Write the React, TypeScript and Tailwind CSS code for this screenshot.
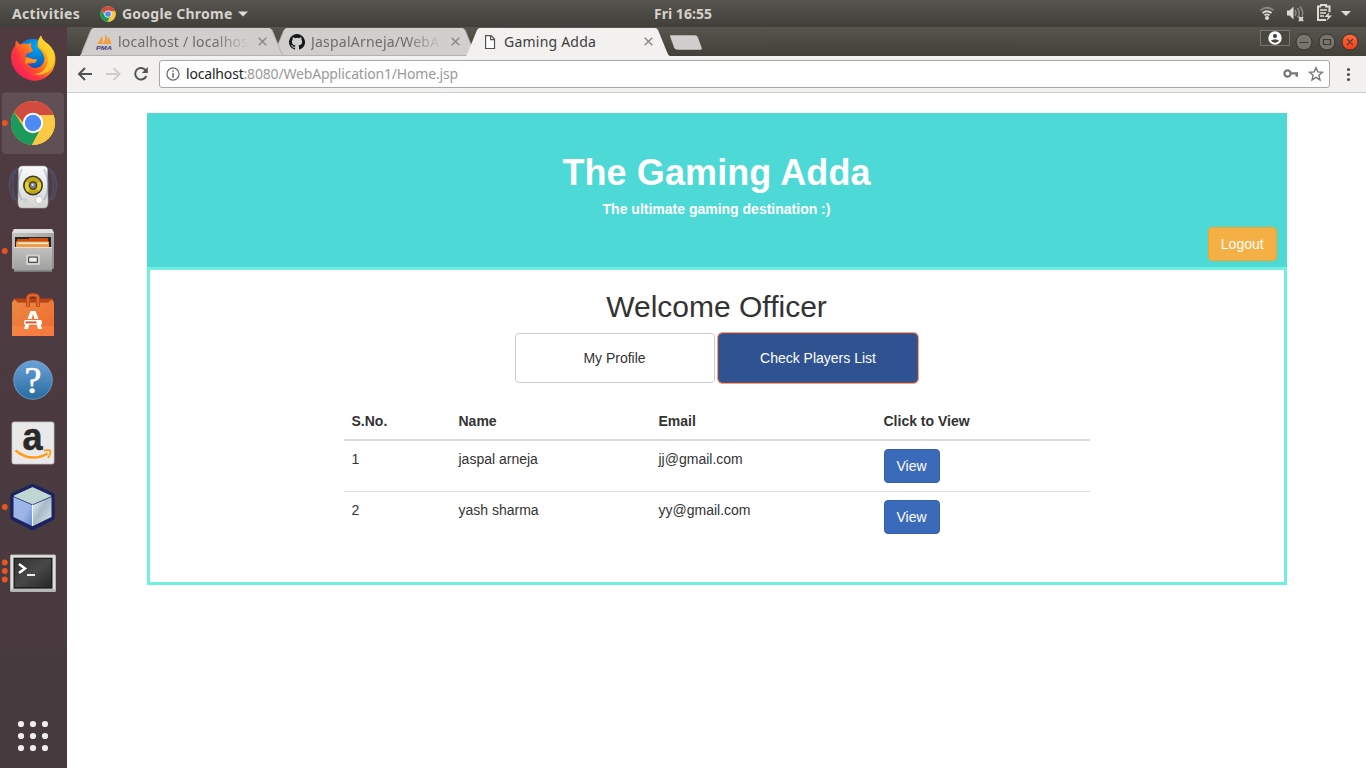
import type { ReactNode } from "react";

function DockItem({ dots = [], active = false, children }: { dots?: number[]; active?: boolean; children: ReactNode }) {
  return (
    <button className="block h-16 w-[67px] shrink-0">
      <svg width="67" height="64" viewBox="0 0 67 64">
        {active && <rect x="2" y="1.5" width="62" height="61.5" rx="4" fill="#fff" fillOpacity=".1" />}
        {dots.map((y) => (
          <circle key={y} cx="4.8" cy={y} r="2.9" fill="#e95420" />
        ))}
        {children}
      </svg>
    </button>
  );
}

function ChromeDisc() {
  return (
    <>
      <circle cx="24" cy="24" r="22" fill="#fbc943" />
      <path d="M4.9 13A22 22 0 0 1 43.1 13L44.500 16H24A9 9 0 0 0 15.500 25Z" fill="#d14b3f" />
      <path d="M4.900 13A22 22 0 0 0 23 46L31.500 30A10 10 0 0 1 15.500 29.500Z" fill="#1b9a5c" />
      <path d="M44.500 16H24L31.500 30 23 46A22 22 0 0 0 44.500 16Z" fill="#fbc943" />
      <circle cx="24" cy="24" r="10.2" fill="#fff" />
      <circle cx="24" cy="24" r="8.2" fill="#4c8bf5" />
    </>
  );
}

function Dock() {
  return (
    <nav className="flex w-[67px] shrink-0 flex-col bg-linear-to-b from-[#503b41] to-[#463a3e]">
      <DockItem>
        <defs>
          <linearGradient id="fox" x1="1" y1="0" x2=".1" y2=".8">
            <stop offset="0" stopColor="#fff04a" />
            <stop offset=".35" stopColor="#ffb018" />
            <stop offset=".65" stopColor="#ff5a28" />
            <stop offset="1" stopColor="#f0185d" />
          </linearGradient>
          <radialGradient id="globe" cx=".6" cy=".2" r=".9">
            <stop offset="0" stopColor="#00a8f5" />
            <stop offset=".6" stopColor="#0861c4" />
            <stop offset="1" stopColor="#37117a" />
          </radialGradient>
        </defs>
        <circle cx="33" cy="30" r="18" fill="url(#globe)" />
        <path d="M16 13.500L20 17.500Q24 16 28 17L31.500 16Q30 19 32 22L33 24Q30 26 27 26.500Q25 29 26 31Q29 29 33 32.500L37 33Q34 37 28 37Q34 44 41 39Q46 34 43.500 28Q41 23 37.500 20Q37 13 41 8.500Q42 13 48 17Q55 23 55.500 31Q56 44 45 51Q34 57 23 50Q12 43 11 31Q11 24 15 19Z" fill="url(#fox)" />
        <path d="M41 8.500Q36 16 40 21Q50 26 47 38Q43 47 34 47Q47 50 53 39Q57 25 48 17Q42 13 41 8.500Z" fill="#ffd52e" opacity=".8" />
        <path d="M15 19Q11 25 11 32Q13 47 26 51.500Q38 57 46 49Q29 52 22 41Q18 34 20 27Z" fill="#ff294d" opacity=".55" />
        <path d="M25 37Q29 34 35 36Q37 34 36.500 32Q30 33 26 30Z" fill="#ff9a22" />
      </DockItem>
      <DockItem active dots={[32]}>
        <g transform="translate(9 8)"><ChromeDisc /></g>
      </DockItem>
      <DockItem>
        <defs>
          <linearGradient id="speaker" x1="0" y1="0" x2="0" y2="1"><stop stopColor="#fafafa" /><stop offset="1" stopColor="#d4d5d1" /></linearGradient>
        </defs>
        <path d="M18.500 11L18 53H48L47.500 11Z" fill="none" />
        <path d="M23 11H43Q47.500 11 47.500 15L48 48Q48 53 44 53H22Q18 53 18 48L18.500 15Q18.500 11 23 11Z" fill="url(#speaker)" stroke="#aaa" strokeWidth=".6" />
        <g fill="none" stroke="#4f76b0" strokeWidth="1.800" opacity=".32">
          <path d="M14 15Q5 31 14 45M17 13Q8 31 17 47M22 14Q14 31 22 45" />
          <path d="M52 15Q61 31 52 45M49 13Q58 31 49 47M44 14Q52 31 44 45" />
        </g>
        <circle cx="33" cy="30.500" r="10" fill="#363731" />
        <circle cx="33" cy="30.500" r="8.400" fill="#c3a717" />
        <path d="M33 30.500L26 26.500A8 8 0 0 0 28 37ZM33 30.500L40 26.500A8 8 0 0 1 39 36Z" fill="#e9cd2e" />
        <circle cx="33" cy="30.500" r="4.300" fill="#403b26" />
        <circle cx="33" cy="30.500" r="3" fill="#72818c" />
        <circle cx="32.600" cy="29.800" r="1.200" fill="#dce3e8" />
        <circle cx="39" cy="45" r="3.600" fill="#fff" stroke="#aaa" strokeWidth=".6" />
        <path d="M24 44h3v3h-3z" fill="none" stroke="#bbb" strokeWidth=".6" />
      </DockItem>
      <DockItem dots={[32]}>
        <defs>
          <linearGradient id="cabinet" x1="0" y1="0" x2="1" y2="1"><stop stopColor="#c8c8c6" /><stop offset="1" stopColor="#8b8b8b" /></linearGradient>
          <linearGradient id="drawer" x1="0" y1="0" x2="0" y2="1"><stop stopColor="#c1c1bf" /><stop offset="1" stopColor="#a0a09e" /></linearGradient>
        </defs>
        <path d="M14 10H52L54 14V49Q54 50 52 50V53H14V50Q12 50 12 49V14Z" fill="url(#cabinet)" />
        <path d="M14 10H52L54 14H12Z" fill="#dededd" />
        <path d="M15 18H51V28H15Z" fill="#292422" />
        <path d="M17 20H29V19H48V27H17Z" fill="#c84e12" />
        <path d="M16 22.500H49V28H16Z" fill="#f49c45" />
        <path d="M18 23.500H48V25H18Z" fill="#fff3db" />
        <path d="M14 28H52V51H14Z" fill="url(#drawer)" />
        <path d="M14 28.500H52" stroke="#dededd" strokeWidth="1" />
        <path d="M14 51.500H52V53H14Z" fill="#777" />
        <rect x="26" y="35.500" width="14" height="10.500" rx="1.500" fill="#d2d2d0" />
        <rect x="28" y="37.500" width="10" height="6.500" rx="1" fill="#4f4f4f" />
        <rect x="29.200" y="38.700" width="7.600" height="4" fill="#eee" />
      </DockItem>
      <DockItem>
        <defs>
          <linearGradient id="bag" x1="0" y1="0" x2="1" y2="1"><stop stopColor="#e98a43" /><stop offset="1" stopColor="#f26930" /></linearGradient>
        </defs>
        <path d="M14 15.500H52L54 19.500H12Z" fill="#bb4413" />
        <path d="M12 19.500L14 16.500 18 19.500 48 19.500 52 16.500 54 19.500V53H12Z" fill="url(#bag)" />
        <path d="M12 43H54V53H12Z" fill="#ff8b4e" opacity=".45" />
        <path d="M28 24V14.500Q28.500 12 33 12Q37.500 12 38 14.500V24" fill="none" stroke="#c34916" strokeWidth="4" />
        <path d="M28 23.500V14.500Q28.500 12 33 12Q37.500 12 38 14.500V23.500" fill="none" stroke="#e96a37" strokeWidth="1.700" />
        <path d="M30.500 28H35.500L38.500 36H34.500L33 31 31.500 36H27.500ZM25.500 41H29.500L28 46H24ZM36.500 41H40.500L42 46H38Z" fill="#fff" />
        <rect x="24" y="37" width="18" height="4.800" rx="1.500" fill="#fff" />
        <rect x="25.500" y="38.400" width="11" height="2" fill="#e3542c" />
      </DockItem>
      <DockItem>
        <defs>
          <linearGradient id="help" x1="0" y1="0" x2="0" y2="1"><stop stopColor="#6aa2d8" /><stop offset="1" stopColor="#286b9e" /></linearGradient>
        </defs>
        <circle cx="33" cy="34" r="19.500" fill="#263e53" opacity=".55" />
        <circle cx="33" cy="33" r="19.300" fill="url(#help)" stroke="#7ca7ce" strokeWidth=".8" />
        <text x="33" y="46" textAnchor="middle" fontFamily="Liberation Serif" fontSize="38" fill="#fff" stroke="#fff" strokeWidth=".7">?</text>
      </DockItem>
      <DockItem>
        <rect x="12" y="11" width="42" height="42" rx="2" fill="#e9e9e9" stroke="#c6c1c2" strokeWidth=".8" />
        <text x="32.500" y="39" textAnchor="middle" fontFamily="Liberation Sans" fontWeight="700" fontSize="39" fill="#292929" stroke="#292929" strokeWidth=".6" textLength="20" lengthAdjust="spacingAndGlyphs">a</text>
        <path d="M15.500 39.500Q31 52 47.500 42.500" fill="none" stroke="#ff9b12" strokeWidth="2.500" />
        <path d="M44 39.500Q50 38.500 50.500 40Q51 42 48 47" fill="none" stroke="#ff9b12" strokeWidth="1.800" />
      </DockItem>
      <DockItem dots={[32]}>
        <defs>
          <linearGradient id="cubeLeft" x1="0" y1="0" x2="1" y2="1"><stop stopColor="#9fbaf0" /><stop offset=".6" stopColor="#9bb4e5" /><stop offset="1" stopColor="#6488ce" /></linearGradient>
          <linearGradient id="cubeRight" x1="0" y1="0" x2="1" y2="1"><stop stopColor="#f2faff" /><stop offset=".45" stopColor="#a8b9c7" /><stop offset="1" stopColor="#dce9ed" /></linearGradient>
        </defs>
        <path d="M32.500 11.500L52 20.500V42.500L32.500 52.500 13 42.500V20.500Z" fill="#1b2360" stroke="#1b2360" strokeWidth="5.500" strokeLinejoin="round" />
        <path d="M32.500 12.500L51 21 32.500 29 14 21Z" fill="#bed7d3" stroke="#dcefed" strokeWidth=".7" />
        <path d="M13.500 22L32 30V51L13.500 42Z" fill="url(#cubeLeft)" />
        <path d="M51.500 22L33 30V51L51.500 42Z" fill="url(#cubeRight)" />
        <path d="M32.500 29.500V51" stroke="#f0f7ff" strokeWidth="1" />
      </DockItem>
      <DockItem dots={[23.5, 32, 40.5]}>
        <defs>
          <linearGradient id="terminal" x1="0" y1="0" x2="1" y2="1"><stop stopColor="#333" /><stop offset=".5" stopColor="#484848" /><stop offset="1" stopColor="#282828" /></linearGradient>
        </defs>
        <rect x="10" y="15.500" width="46" height="37.500" rx="1.500" fill="#b4b4b2" />
        <rect x="11" y="16.200" width="44" height="34" fill="#dededc" />
        <rect x="13.500" y="18.700" width="39" height="31" fill="#1f1f1f" />
        <rect x="15" y="20" width="36" height="28" fill="url(#terminal)" />
        <path d="M19 25L25 29.500 19 34" fill="none" stroke="#fff" strokeWidth="2.500" />
        <path d="M27 36H35" stroke="#fff" strokeWidth="1.800" />
      </DockItem>
      <button className="mt-auto block h-16 w-[67px]">
        <svg width="67" height="64" viewBox="0 0 67 64" fill="#eeeeec">
          {[20, 32, 44].map((y) => [21, 33, 45].map((x) => <circle key={`${x}-${y}`} cx={x} cy={y} r="3.1" />))}
        </svg>
      </button>
    </nav>
  );
}

function TopBar() {
  return (
    <header className="grid h-[27px] shrink-0 grid-cols-3 items-center bg-linear-to-b from-[#575550] to-[#403f3a] font-['Noto_Sans'] text-[14px] font-bold text-[#d6d2ca]">
      <div className="flex items-center pl-3">
        <span className="w-[88px] pb-px whitespace-nowrap text-[14px] tracking-[0.3px]">Activities</span>
        <svg width="16" height="16" viewBox="1 1 46 46"><ChromeDisc /></svg>
        <span className="ml-[6px] w-[112px] pb-px whitespace-nowrap text-[14px] tracking-[0.23px]">Google Chrome</span>
        <svg className="ml-[4px]" width="10" height="6" viewBox="0 0 10 6"><path d="M0 .5H10L5 5.5Z" fill="#dfdbd2" /></svg>
      </div>
      <div className="pb-px text-center text-[14px] tracking-[0.05px]">Fri 16:55</div>
      <svg className="justify-self-end" width="116" height="27" viewBox="1250 0 116 27">
        <g fill="none" stroke="#dfdbd2" strokeWidth="1.8">
          <path d="M1260.5 10.4Q1267 5 1273.5 10.4" opacity=".4" />
          <path d="M1262.5 13Q1267 9.5 1271.5 13M1264.5 15.4Q1267 13.5 1269.5 15.4" />
        </g>
        <circle cx="1267" cy="18" r="2" fill="#dfdbd2" />
        <path d="M1287 10.500h2.500l4-4v13l-4-4H1287Z" fill="#dfdbd2" />
        <path d="M1295 10q2 3 0 6M1297.500 8q3.500 5 0 9.500M1300 6.500q4 5 2 9.500" fill="none" stroke="#8d8b84" strokeWidth="1.4" />
        <path d="M1299 17l4 4m0-4l-4 4" stroke="#dfdbd2" strokeWidth="1.9" />
        <path d="M1321 6.500V5h5v1.500h3.500V12M1321 6.500h-3v13.500h8" fill="none" stroke="#dfdbd2" strokeWidth="2" />
        <path d="M1320 10h7M1320 13h6M1320 16h4" stroke="#dfdbd2" strokeWidth="1.6" />
        <path d="M1329.500 12l-5 5h3.500l-1.500 4 5.500-5.500h-3.500Z" fill="#dfdbd2" />
        <path d="M1341 11H1351L1346 16Z" fill="#dfdbd2" />
      </svg>
    </header>
  );
}

function Close() {
  return <svg className="shrink-0" width="9" height="9" viewBox="0 0 9 9"><path d="M.7.7l7.600 7.600M8.300.7L.7 8.300" stroke="#8a8a8a" strokeWidth="1.5" /></svg>;
}

function Tab({ icon, active, layer, children }: { icon: ReactNode; active?: boolean; layer: string; children: ReactNode }) {
  return (
    <div className={`relative -mr-3 flex h-[29px] w-[205px] shrink-0 items-center pl-4 ${layer}`}>
      <svg className="absolute inset-0" width="205" height="29" viewBox="0 0 205 29">
        <path d="M0 29L2 25L11 3Q12 1 14 1H189Q191 1 192 3L201 25Q202 28 204 29Z" fill={active ? "#f2f1f0" : "#d1cfcd"} />
        {!active && <path d="M0 28.500H205M192 3L201 25Q202 28 204 29M2 25L11 3" fill="none" stroke="#b3b2ae" strokeWidth="1" />}
      </svg>
      <div className="relative flex w-full items-center">
        {icon}
        <span className={active ? "ml-[6px] w-[136px] whitespace-nowrap text-[14px] tracking-[0.22px] text-[#3e3d3c]" : "ml-[6px] w-[132px] overflow-hidden whitespace-nowrap text-[14px] tracking-[0.22px] text-[#6d6b69] mask-r-from-72%"}>{children}</span>
        <span className={active ? "ml-1" : "ml-[8px]"}><Close /></span>
      </div>
    </div>
  );
}

function TabStrip() {
  return (
    <div className="flex h-[29px] shrink-0 bg-linear-to-b from-[#57564e] to-[#414039] pl-[13px] font-['Noto_Sans']">
      <Tab layer="z-20" icon={<svg width="16" height="16" viewBox="0 0 16 16"><path d="M1 10Q5 6 5 1.500Q7.500 6 6.500 10ZM6.500 10Q10 6 9 0Q12.500 4 11.500 10ZM11.500 10L12.500 2.500Q14.500 6 15.500 10Z" fill="#f79b3c" /><text x="0" y="15.500" fontFamily="Liberation Sans" fontSize="6" fontWeight="700" fontStyle="italic" fill="#403b76" textLength="16" lengthAdjust="spacingAndGlyphs">PMA</text></svg>}>localhost / localhos</Tab>
      <Tab layer="z-10" icon={<svg width="16" height="16" viewBox="0 0 16 16"><path d="M8 0a8 8 0 0 0-2.530 15.590c.4.070.550-.170.550-.380v-1.490c-2.010.370-2.530-.490-2.690-.940-.090-.230-.480-.940-.820-1.130-.280-.150-.680-.520-.010-.530.630-.010 1.080.580 1.230.820.720 1.210 1.870.870 2.330.660.070-.520.280-.870.510-1.070-1.780-.200-3.640-.890-3.640-3.950 0-.870.310-1.590.820-2.150-.080-.200-.360-1.020.080-2.120 0 0 .670-.210 2.200.820a7.600 7.600 0 0 1 4 0c1.530-1.040 2.200-.820 2.200-.820.440 1.100.160 1.920.080 2.120.510.560.820 1.270.820 2.150 0 3.070-1.870 3.750-3.650 3.950.290.250.540.730.540 1.480v2.200c0 .210.150.460.550.380A8 8 0 0 0 8 0Z" fill="#171717" /></svg>}>JaspalArneja/WebA</Tab>
      <Tab layer="z-30" active icon={<svg width="16" height="16" viewBox="0 0 16 16"><path d="M3.600 1.600h5.400l3.500 3.500v9.400H3.600ZM8.600 1.600v4h4" fill="#fff" stroke="#525252" strokeWidth="1.200" /></svg>}>Gaming Adda</Tab>
      <svg className="ml-[10px] mt-[7px]" width="34" height="18" viewBox="669 34 34 18"><path d="M670 35H695Q697 35 698 37L702 48Q702.500 50 700 50H678Q675 50 674 48L670 37Q669.500 35 670 35Z" fill="#d1cfcd" stroke="#45443e" strokeWidth=".5" /></svg>
      <svg className="ml-auto" width="116" height="29" viewBox="1250 27 116 29">
        <defs><linearGradient id="closeWindow" x1="0" y1="0" x2="0" y2="1"><stop stopColor="#ff6b3d" /><stop offset="1" stopColor="#f23c16" /></linearGradient></defs>
        <rect x="1260.500" y="30.500" width="29" height="15" fill="#484740" stroke="#77756d" />
        <circle cx="1275" cy="38" r="6.700" fill="#fff" />
        <circle cx="1275" cy="36" r="2.100" fill="#45443e" />
        <path d="M1270.800 40.800Q1275 37.700 1279.200 40.800Q1275 44.500 1270.800 40.800Z" fill="#45443e" />
        <g stroke="#35342f"><circle cx="1304" cy="42" r="8" fill="#77756c" /><circle cx="1327" cy="42" r="8" fill="#77756c" /><circle cx="1350" cy="42" r="8" fill="url(#closeWindow)" /></g>
        <path d="M1300 42.500H1308M1323.500 39.500H1330.500V44.500H1323.500ZM1347.200 39.200l5.600 5.600m0-5.600l-5.600 5.600" fill="none" stroke="#3b3933" strokeWidth="1.200" />
      </svg>
    </div>
  );
}

function Toolbar() {
  return (
    <div className="flex h-[37px] shrink-0 items-center border-b border-[#cfcdcb] bg-[#f2f1f0] font-['Noto_Sans']">
      <svg width="92" height="36" viewBox="67 56 92 36" fill="none" strokeWidth="2">
        <path d="M92 74H79.500M85 68L79 74l6 6" stroke="#525252" />
        <path d="M106 74H118.500M113.500 68L119.500 74l-6 6" stroke="#cfcdcb" />
        <path d="M145.800 70.500A5.800 5.800 0 1 0 146.300 76" stroke="#525252" />
        <path d="M147.800 67v6H141.800Z" fill="#525252" />
      </svg>
      <div className="flex h-7 w-[1171px] items-center rounded-[3px] border border-[#a8a7a5] bg-white">
        <svg className="ml-[6px]" width="14" height="14" viewBox="0 0 15 15" fill="none" stroke="#666"><circle cx="7.500" cy="7.500" r="6.500" strokeWidth="1.300" /><path d="M7.500 6.500v5M7.500 3.500v1.700" strokeWidth="1.600" /></svg>
        <span className="ml-[6px] pb-0.5 text-[14px] tracking-[-0.18px] text-[#999]"><span className="text-[#252525]">localhost</span>:8080/WebApplication1/Home.jsp</span>
        <svg className="ml-auto" width="52" height="26" viewBox="1277 61 52 26">
          <circle cx="1287.500" cy="73.500" r="3.100" fill="none" stroke="#777" strokeWidth="2.200" />
          <path d="M1290.500 72.300H1298V76.800H1295.500V74.500H1290.500Z" fill="#777" />
          <path d="M1316 67.700l1.800 4.200 4.700.4-3.600 3 1.100 4.600-4-2.500-4 2.500 1.100-4.600-3.600-3 4.700-.4Z" fill="none" stroke="#777" strokeWidth="1.400" />
        </svg>
      </div>
      <svg width="36" height="36" viewBox="1330 56 36 36" fill="#525252"><circle cx="1348.500" cy="69.500" r="1.600" /><circle cx="1348.500" cy="74.500" r="1.600" /><circle cx="1348.500" cy="79.500" r="1.600" /></svg>
    </div>
  );
}

const players = [
  { name: "jaspal arneja", email: "jj@gmail.com" },
  { name: "yash sharma", email: "yy@gmail.com" },
];

function GamingPage() {
  return (
    <main className="flex-1 bg-white pt-5 pl-[79.5px] font-['Liberation_Sans',sans-serif] text-[14px] leading-5 text-[#333]">
      <div className="w-[1140px]">
        <header className="flex h-[154px] flex-col bg-[#4dd9d5] text-center text-white">
          <h1 className="mt-10 text-[36px] leading-[40px] font-bold tracking-[0.1px]">The Gaming Adda</h1>
          <p className="mt-[6px] font-bold">The ultimate gaming destination :)</p>
          <button className="mt-2 mr-[9.5px] h-[34px] w-[69.5px] self-end rounded-[4px] border border-[#f0a429] bg-[#f4b044]">Logout</button>
        </header>
        <section className="h-[318px] border-[3px] border-[#70efde]">
          <h2 className="mt-5 text-center text-[30px] leading-[33px]">Welcome Officer</h2>
          <div className="mt-[10px] flex justify-center gap-[3px] pr-px">
            <button className="h-[50px] w-[200px] rounded-[4px] border border-[#ccc] bg-white">My Profile</button>
            <button className="h-[50px] w-[200px] rounded-[4px] border border-[#704e60] bg-[#2f5391] pl-px text-white outline-1 outline-[#ff9e7b]">Check Players List</button>
          </div>
          <table className="mt-[19px] ml-[194px] w-[746px] table-fixed border-collapse text-left">
            <colgroup><col className="w-[107px]" /><col className="w-[200px]" /><col className="w-[225px]" /><col /></colgroup>
            <thead><tr className="h-[38px] border-b-2 border-[#ddd]">
              <th className="px-2">S.No.</th><th className="px-2">Name</th><th className="px-2">Email</th><th className="px-2">Click to View</th>
            </tr></thead>
            <tbody>{players.map((player, index) => (
              <tr key={player.email} className="h-[51px] border-b border-[#ddd] align-top last:border-b-0">
                <td className="p-2">{index + 1}</td><td className="p-2">{player.name}</td><td className="p-2">{player.email}</td>
                <td className="px-2 pt-2"><button className="block h-[34px] w-[56px] rounded-[4px] border border-[#3360a5] bg-[#3b6aba] text-white">View</button></td>
              </tr>
            ))}</tbody>
          </table>
        </section>
      </div>
    </main>
  );
}

export default function App() {
  return (
    <div className="flex h-screen w-screen flex-col overflow-hidden">
      <TopBar />
      <div className="flex min-h-0 flex-1">
        <Dock />
        <div className="flex min-w-0 flex-1 flex-col">
          <TabStrip />
          <Toolbar />
          <GamingPage />
        </div>
      </div>
    </div>
  );
}
